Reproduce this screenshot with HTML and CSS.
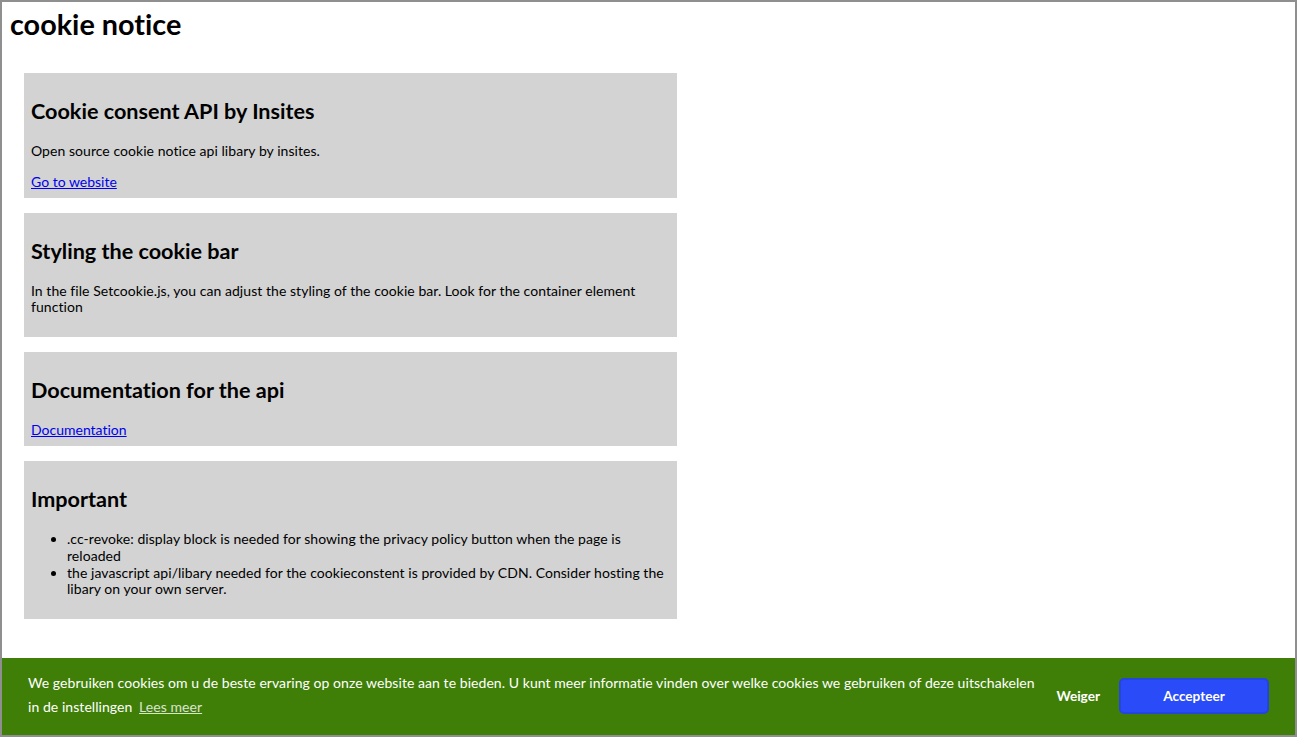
FILE: index.html
```html
<!DOCTYPE html>
<html lang="en">
<head>
<meta charset="utf-8">
<title>cookie notice</title>
<link rel="stylesheet" href="styles.css">
</head>
<body>
<h1 class="title">cookie notice</h1>
<main class="cards">
  <section class="card">
    <h2>Cookie consent API by Insites</h2>
    <p>Open source cookie notice api libary by insites.</p>
    <a href="#">Go to website</a>
  </section>
  <section class="card">
    <h2>Styling the cookie bar</h2>
    <p>In the file Setcookie.js, you can adjust the styling of the cookie bar. Look for the container element function</p>
  </section>
  <section class="card">
    <h2>Documentation for the api</h2>
    <a href="#">Documentation</a>
  </section>
  <section class="card">
    <h2>Important</h2>
    <ul>
      <li>.cc-revoke: display block is needed for showing the privacy policy button when the page is reloaded</li>
      <li>the javascript api/libary needed for the cookieconstent is provided by CDN. Consider hosting the libary on your own server.</li>
    </ul>
  </section>
</main>
<div class="cc-banner">
  <span class="cc-message">We gebruiken cookies om u de beste ervaring op onze website aan te bieden. U kunt meer informatie vinden over welke cookies we gebruiken of deze uitschakelen in de instellingen <a class="cc-link" href="#">Lees meer</a></span>
  <div class="cc-compliance">
    <a class="cc-btn cc-deny" href="#">Weiger</a>
    <a class="cc-btn cc-allow" href="#">Accepteer</a>
  </div>
</div>
<div class="frame"></div>
</body>
</html>
```
FILE: styles.css
```css
html {
  margin: 0;
  padding: 0;
}
body {
  margin: 0;
  padding: 2px 10px;
  font-family: Lato, "Open Sans", sans-serif;
  font-size: 14px;
  line-height: 1.2;
  color: #000;
  background: #fff;
  font-variant-ligatures: none;
}
.title {
  font-size: 28.8px;
  font-weight: 700;
  margin: 5px 0 0 0;
  line-height: 34px;
}
.cards {
  width: 653px;
  margin: 32px 0 0 14px;
  display: flex;
  flex-direction: column;
  gap: 15px;
}
.card {
  background: #d3d3d3;
  padding: 8px 7px 7px;
}
.card h2 {
  font-size: 21.6px;
  font-weight: 700;
  margin: 17.3px 0 18.3px;
  line-height: 26.4px;
}
.card p {
  margin: 14px 0;
  letter-spacing: 0.05px;
}
.card ul {
  margin: 14px 0;
  padding-left: 36px;
  letter-spacing: 0.05px;
}
.card a {
  color: #0000ee;
}
.cc-banner {
  position: fixed;
  left: 0;
  right: 0;
  bottom: 0;
  display: flex;
  align-items: center;
  padding: 13px 28px 18px 28px;
  background: #3f7f08;
  color: #fff;
  font-size: 14px;
  line-height: 24px;
}
.cc-message {
  flex: 1;
  margin-right: 0;
  letter-spacing: 0.06px;
}
.cc-link {
  color: #fff;
  opacity: 0.8;
  text-decoration: underline;
  margin-left: 3px;
}
.cc-compliance {
  display: flex;
  align-items: center;
  margin-top: 1px;
}
.cc-btn {
  display: block;
  color: #fff;
  text-decoration: none;
  font-size: 13.6px;
  font-weight: 700;
  text-align: center;
  white-space: nowrap;
  border: 2px solid transparent;
  padding: 6px 12px;
  line-height: 20px;
  border-radius: 5px;
}
.cc-deny {
  margin-right: 5px;
}
.cc-allow {
  background: #2a4bf8;
  border-color: #2545e0;
  width: 150px;
  box-sizing: border-box;
}
.frame {
  position: fixed;
  inset: 0;
  border: 2px solid #8f8f8f;
  pointer-events: none;
}
```
